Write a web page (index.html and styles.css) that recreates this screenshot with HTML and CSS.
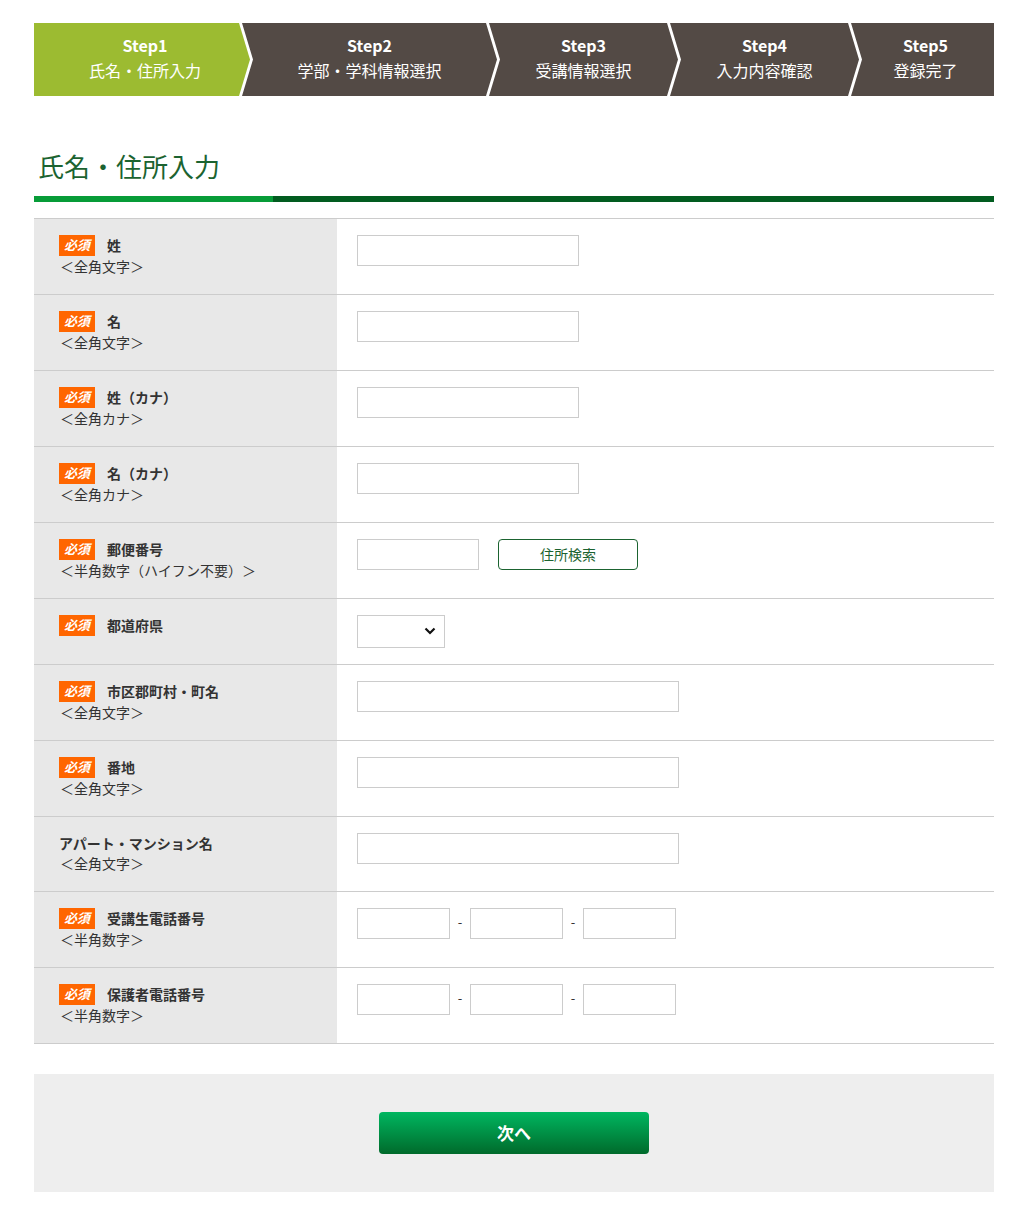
FILE: index.html
```html
<!DOCTYPE html>
<html lang="ja">
<head>
    <meta charset="UTF-8">
    <meta name="viewport" content="width=device-width, initial-scale=1.0">
    <title>氏名・住所入力</title>
    <link rel="stylesheet" href="styles.css">
</head>
<body>
    <div class="wrap">
        <ol class="steps">
            <li class="step step-1 current"><span class="step-num">Step1</span><span class="step-name">氏名・住所入力</span></li>
            <li class="step step-2"><span class="step-num">Step2</span><span class="step-name">学部・学科情報選択</span></li>
            <li class="step step-3"><span class="step-num">Step3</span><span class="step-name">受講情報選択</span></li>
            <li class="step step-4"><span class="step-num">Step4</span><span class="step-name">入力内容確認</span></li>
            <li class="step step-5"><span class="step-num">Step5</span><span class="step-name">登録完了</span></li>
        </ol>

        <h1 class="page-title">氏名・住所入力</h1>
        <div class="title-bar"></div>

        <form class="entry-form">
            <div class="form-table">
                <div class="form-row">
                    <div class="form-label">
                        <p class="label-main"><span class="req">必須</span>姓</p>
                        <p class="label-note">＜全角文字＞</p>
                    </div>
                    <div class="form-field"><input type="text" class="input-m"></div>
                </div>
                <div class="form-row">
                    <div class="form-label">
                        <p class="label-main"><span class="req">必須</span>名</p>
                        <p class="label-note">＜全角文字＞</p>
                    </div>
                    <div class="form-field"><input type="text" class="input-m"></div>
                </div>
                <div class="form-row">
                    <div class="form-label">
                        <p class="label-main"><span class="req">必須</span>姓（カナ）</p>
                        <p class="label-note">＜全角カナ＞</p>
                    </div>
                    <div class="form-field"><input type="text" class="input-m"></div>
                </div>
                <div class="form-row">
                    <div class="form-label">
                        <p class="label-main"><span class="req">必須</span>名（カナ）</p>
                        <p class="label-note">＜全角カナ＞</p>
                    </div>
                    <div class="form-field"><input type="text" class="input-m"></div>
                </div>
                <div class="form-row">
                    <div class="form-label">
                        <p class="label-main"><span class="req">必須</span>郵便番号</p>
                        <p class="label-note">＜半角数字（ハイフン不要）＞</p>
                    </div>
                    <div class="form-field">
                        <input type="text" class="input-s">
                        <button type="button" class="btn-zip">住所検索</button>
                    </div>
                </div>
                <div class="form-row">
                    <div class="form-label">
                        <p class="label-main"><span class="req">必須</span>都道府県</p>
                    </div>
                    <div class="form-field">
                        <div class="select-wrap">
                            <select class="select-pref"><option></option></select>
                            <svg class="select-arrow" width="12" height="8" viewBox="0 0 12 8"><path d="M1.5 1.5 L6 6 L10.5 1.5" fill="none" stroke="#111" stroke-width="2.2"/></svg>
                        </div>
                    </div>
                </div>
                <div class="form-row">
                    <div class="form-label">
                        <p class="label-main"><span class="req">必須</span>市区郡町村・町名</p>
                        <p class="label-note">＜全角文字＞</p>
                    </div>
                    <div class="form-field"><input type="text" class="input-l"></div>
                </div>
                <div class="form-row">
                    <div class="form-label">
                        <p class="label-main"><span class="req">必須</span>番地</p>
                        <p class="label-note">＜全角文字＞</p>
                    </div>
                    <div class="form-field"><input type="text" class="input-l"></div>
                </div>
                <div class="form-row row-plain">
                    <div class="form-label">
                        <p class="label-main">アパート・マンション名</p>
                        <p class="label-note">＜全角文字＞</p>
                    </div>
                    <div class="form-field"><input type="text" class="input-l"></div>
                </div>
                <div class="form-row">
                    <div class="form-label">
                        <p class="label-main"><span class="req">必須</span>受講生電話番号</p>
                        <p class="label-note">＜半角数字＞</p>
                    </div>
                    <div class="form-field">
                        <input type="text" class="input-tel"><span class="dash">-</span><input type="text" class="input-tel"><span class="dash">-</span><input type="text" class="input-tel">
                    </div>
                </div>
                <div class="form-row">
                    <div class="form-label">
                        <p class="label-main"><span class="req">必須</span>保護者電話番号</p>
                        <p class="label-note">＜半角数字＞</p>
                    </div>
                    <div class="form-field">
                        <input type="text" class="input-tel"><span class="dash">-</span><input type="text" class="input-tel"><span class="dash">-</span><input type="text" class="input-tel">
                    </div>
                </div>
            </div>

            <div class="form-submit">
                <button type="submit" class="btn-next">次へ</button>
            </div>
        </form>
    </div>
</body>
</html>
```

FILE: styles.css
```css
body {
    margin: 0;
    padding: 23px 0 19px;
    font-family: "Noto Sans CJK JP", "Noto Sans", sans-serif;
    color: #333;
    background: #fff;
}
p {
    margin: 0;
}
.wrap {
    width: 960px;
    margin: 0 auto;
}

/* steps */
.steps {
    display: flex;
    list-style: none;
    margin: 0;
    padding: 0;
}
.step {
    height: 73px;
    margin-left: -8px;
    padding-bottom: 4px;
    box-sizing: border-box;
    display: flex;
    flex-direction: column;
    align-items: center;
    justify-content: center;
    background: #534a45;
    color: #fff;
    clip-path: polygon(0 0, calc(100% - 11px) 0, 100% 50%, calc(100% - 11px) 100%, 0 100%, 11px 50%);
}
.step.current {
    background: #9cbb31;
}
.step-1 {
    flex: 0 0 216px;
    margin-left: 0;
    padding-left: 6px;
    clip-path: polygon(0 0, calc(100% - 11px) 0, 100% 50%, calc(100% - 11px) 100%, 0 100%);
}
.step-2 { flex: 0 0 255px; }
.step-3 { flex: 0 0 189px; }
.step-4 { flex: 0 0 189px; }
.step-5 {
    flex: 0 0 143px;
    padding-left: 6px;
    clip-path: polygon(0 0, 100% 0, 100% 100%, 0 100%, 11px 50%);
}
.step-num {
    font-size: 16px;
    font-weight: bold;
    line-height: 25px;
}
.step-name {
    font-size: 16px;
    line-height: 25px;
}

/* title */
.page-title {
    margin: 52px 0 12px;
    padding-left: 4px;
    font-size: 26px;
    font-weight: normal;
    line-height: 36px;
    color: #1b6330;
}
.title-bar {
    height: 6px;
    background: linear-gradient(to right, #079c38 0, #079c38 239px, #025c20 239px);
    margin-bottom: 16px;
}

/* form table */
.form-table {
    border-top: 1px solid #ccc;
}
.form-row {
    display: flex;
    border-bottom: 1px solid #ccc;
}
.form-label {
    flex: 0 0 303px;
    box-sizing: border-box;
    padding: 16px 20px 18px 25px;
    background: #e8e8e8;
}
.label-main {
    font-size: 14px;
    font-weight: bold;
    line-height: 21px;
}
.row-plain .label-main {
    line-height: 20px;
}
.label-note {
    font-size: 14px;
    line-height: 20px;
    padding-left: 1px;
}
.req {
    display: inline-block;
    width: 36px;
    height: 21px;
    margin-right: 12px;
    background: #ff6600;
    color: #fff;
    font-size: 13px;
    font-weight: bold;
    font-style: italic;
    line-height: 20px;
    text-align: center;
    vertical-align: top;
}
.form-field {
    flex: 1;
    display: flex;
    align-items: flex-start;
    padding: 16px 20px 16px;
}
input[type="text"] {
    box-sizing: border-box;
    height: 31px;
    margin: 0;
    padding: 4px 6px;
    border: 1px solid #ccc;
    font-size: 14px;
    background: #fff;
}
.input-m { width: 222px; }
.input-l { width: 322px; }
.input-s { width: 122px; }
.input-tel { width: 93px; }
.dash {
    width: 20px;
    text-align: center;
    font-size: 13px;
    line-height: 27px;
}
.btn-zip {
    width: 140px;
    height: 31px;
    margin-left: 19px;
    padding-bottom: 2px;
    border: 1px solid #1b6330;
    border-radius: 4px;
    background: #fff;
    color: #1b6330;
    font-family: inherit;
    font-size: 14px;
    cursor: pointer;
}
.select-wrap {
    position: relative;
}
.select-pref {
    width: 88px;
    height: 33px;
    border: 1px solid #ccc;
    border-radius: 0;
    background: #fff;
    appearance: none;
    -webkit-appearance: none;
    font-family: inherit;
    font-size: 14px;
}
.select-arrow {
    position: absolute;
    left: 67px;
    top: 12px;
    pointer-events: none;
}

/* submit */
.form-submit {
    margin-top: 30px;
    padding: 38px 0;
    background: #eee;
    text-align: center;
}
.btn-next {
    width: 270px;
    height: 42px;
    padding-bottom: 3px;
    border: none;
    border-radius: 4px;
    background: linear-gradient(to bottom, #00b660, #006a2b);
    color: #fff;
    font-family: inherit;
    font-size: 17px;
    font-weight: bold;
    cursor: pointer;
}
```
